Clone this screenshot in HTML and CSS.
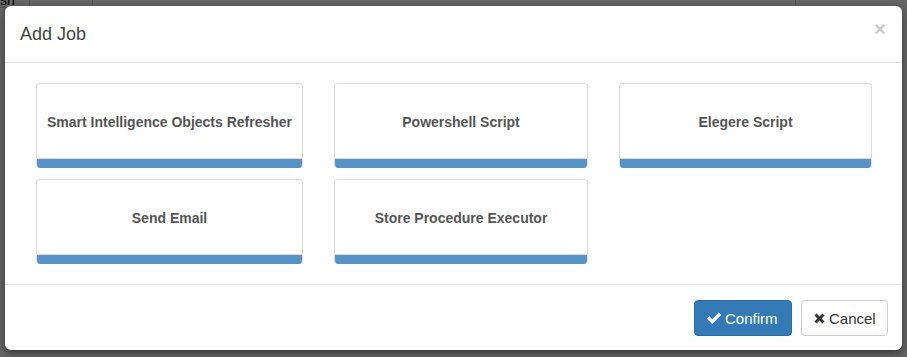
FILE: index.html
```html
<!DOCTYPE html>
<html lang="en">

<head>
    <meta charset="UTF-8">
    <meta name="viewport" content="width=device-width, initial-scale=1.0">
    <title>Add Job</title>
    <link rel="stylesheet" href="styles.css">
</head>

<body>
    <div class="page">
        <table class="page-table">
            <tr>
                <td class="cell-a">sh</td>
                <td class="cell-b"></td>
                <td class="cell-c"></td>
            </tr>
        </table>
    </div>

    <div class="backdrop">
        <div class="modal">
            <div class="modal-header">
                <span class="close">&times;</span>
                <h4 class="modal-title">Add Job</h4>
            </div>
            <div class="modal-body">
                <div class="jobs">
                    <div class="job">
                        <div class="job-name">Smart Intelligence Objects Refresher</div>
                        <div class="job-bar"></div>
                    </div>
                    <div class="job">
                        <div class="job-name">Powershell Script</div>
                        <div class="job-bar"></div>
                    </div>
                    <div class="job">
                        <div class="job-name">Elegere Script</div>
                        <div class="job-bar"></div>
                    </div>
                    <div class="job">
                        <div class="job-name">Send Email</div>
                        <div class="job-bar"></div>
                    </div>
                    <div class="job">
                        <div class="job-name">Store Procedure Executor</div>
                        <div class="job-bar"></div>
                    </div>
                </div>
            </div>
            <div class="modal-footer">
                <button type="button" class="btn btn-primary">
                    <svg class="icon" viewBox="0 0 16 16" width="16" height="16">
                        <path d="M0.8 8.6 L3.2 6.2 L6.2 9.2 L12.8 2.6 L15.2 5 L6.2 14 Z" fill="#fff" />
                    </svg>Confirm
                </button>
                <button type="button" class="btn btn-default">
                    <svg class="icon" viewBox="0 0 16 16" width="13" height="13">
                        <path d="M1.8 4.4 L4.4 1.8 L8 5.4 L11.6 1.8 L14.2 4.4 L10.6 8 L14.2 11.6 L11.6 14.2 L8 10.6 L4.4 14.2 L1.8 11.6 L5.4 8 Z" fill="#333" />
                    </svg>Cancel
                </button>
            </div>
        </div>
    </div>
</body>

</html>
```

FILE: styles.css
```css
body {
    margin: 0;
    font-family: "Liberation Sans", Arial, sans-serif;
    font-size: 14px;
    color: #333;
    background-color: #fff;
}

.page {
    height: 357px;
    overflow: hidden;
}

.page-table {
    border-collapse: collapse;
    margin-top: -11px;
}

.page-table td {
    height: 16px;
    border-right: 1px solid #ccc;
    border-bottom: 1px solid #ccc;
    font-size: 14px;
    color: #000;
    vertical-align: bottom;
    line-height: 14px;
}

.cell-a {
    width: 29px;
    padding: 0;
}

.cell-b {
    width: 60px;
}

.cell-c {
    width: 700px;
}

/* dark overlay over the page, with the dialog on top */
.backdrop {
    position: absolute;
    top: 0;
    left: 0;
    width: 907px;
    height: 357px;
    background-color: rgba(0, 0, 0, 0.6);
}

.modal {
    width: 897px;
    margin: 6px 0 0 5px;
    background-color: #fff;
    border-radius: 6px;
    box-shadow: 0 3px 9px rgba(0, 0, 0, 0.5);
}

.modal-header {
    padding: 15px;
    border-bottom: 1px solid #e5e5e5;
}

.modal-title {
    margin: 0;
    padding-top: 1px;
    font-size: 18px;
    font-weight: normal;
    line-height: 25px;
    color: #444;
}

.close {
    float: right;
    margin-top: -3px;
    margin-right: 1px;
    font-size: 21px;
    font-weight: bold;
    line-height: 1;
    color: #000;
    opacity: 0.2;
}

.modal-body {
    padding: 20px 31px 20px;
}

.jobs {
    display: grid;
    grid-template-columns: 267px 254px 253px;
    column-gap: 31px;
    row-gap: 11px;
}

.job {
    display: flex;
    flex-direction: column;
    height: 84px;
    border: 1px solid #ddd;
    border-bottom: none;
    border-radius: 4px;
    overflow: hidden;
}

.job-name {
    flex: 1;
    display: flex;
    align-items: center;
    justify-content: center;
    padding-top: 1px;
    border-bottom: 1px solid #ddd;
    font-size: 14px;
    font-weight: bold;
    color: #555;
}

.job-bar {
    height: 9px;
    margin: 0 -1px;
    background-color: #5893c7;
}

.modal-footer {
    padding: 15px 14px 14px;
    border-top: 1px solid #e5e5e5;
    display: flex;
    justify-content: flex-end;
    gap: 9px;
}

.btn {
    display: inline-flex;
    align-items: center;
    gap: 3px;
    height: 36px;
    padding: 0 11px;
    font-family: "Liberation Sans", Arial, sans-serif;
    font-size: 15px;
    border: 1px solid transparent;
    border-radius: 4px;
}

.btn-primary {
    width: 98px;
    color: #fff;
    background-color: #337ab7;
    border-color: #2e6da4;
}

.btn-default {
    width: 87px;
    color: #333;
    background-color: #fff;
    border-color: #ccc;
}

.icon {
    flex: none;
}
```
